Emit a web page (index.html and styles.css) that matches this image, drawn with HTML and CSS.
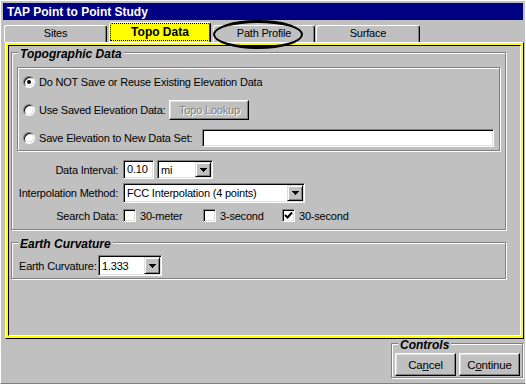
FILE: index.html
```html
<!DOCTYPE html>
<html lang="en">
<head>
    <meta charset="UTF-8">
    <meta name="viewport" content="width=device-width, initial-scale=1.0">
    <title>TAP Point to Point Study</title>
    <link rel="stylesheet" href="styles.css">
</head>
<body>
    <div class="window">
        <div class="titlebar">TAP Point to Point Study</div>

        <div class="tabs">
            <div class="tab tab-sites">Sites</div>
            <div class="tab tab-active">Topo Data</div>
            <div class="tab tab-path">Path Profile</div>
            <div class="tab tab-surface">Surface</div>
        </div>

        <div class="panel">
            <div class="panel-yellow">
                <div class="panel-inner">
                    <div class="group group-topo">
                        <div class="group-title">Topographic Data</div>
                        <div class="option-box">
                            <div class="option-row">
                                <span class="radio on"></span>
                                <span>Do NOT Save or Reuse Existing Elevation Data</span>
                            </div>
                            <div class="option-row">
                                <span class="radio"></span>
                                <span>Use Saved Elevation Data:</span>
                                <button class="btn btn-lookup" disabled>Topo Lookup</button>
                            </div>
                            <div class="option-row">
                                <span class="radio"></span>
                                <span>Save Elevation to New Data Set:</span>
                                <div class="field field-dataset"></div>
                            </div>
                        </div>

                        <div class="settings">
                            <div class="label">Data Interval:</div>
                            <div class="controls">
                                <div class="field field-interval">0.10</div>
                                <div class="combo combo-unit">
                                    <span class="combo-text">mi</span>
                                    <span class="combo-btn"><svg width="7" height="4" viewBox="0 0 7 4" shape-rendering="crispEdges"><path d="M0 0h7v1h-1v1h-1v1h-1v1h-1v-1h-1v-1h-1v-1h-1z"/></svg></span>
                                </div>
                            </div>

                            <div class="label">Interpolation Method:</div>
                            <div class="controls">
                                <div class="combo combo-method">
                                    <span class="combo-text">FCC Interpolation (4 points)</span>
                                    <span class="combo-btn"><svg width="7" height="4" viewBox="0 0 7 4" shape-rendering="crispEdges"><path d="M0 0h7v1h-1v1h-1v1h-1v1h-1v-1h-1v-1h-1v-1h-1z"/></svg></span>
                                </div>
                            </div>

                            <div class="label">Search Data:</div>
                            <div class="controls">
                                <div class="check-item"><span class="checkbox"></span>30-meter</div>
                                <div class="check-item check-mid"><span class="checkbox"></span>3-second</div>
                                <div class="check-item">
                                    <span class="checkbox"><svg width="9" height="9" viewBox="0 0 9 9"><path d="M1 4l2.5 2.5L8 1.5" stroke="#000" stroke-width="2" fill="none"/></svg></span>30-second
                                </div>
                            </div>
                        </div>
                    </div>

                    <div class="group group-earth">
                        <div class="group-title">Earth Curvature</div>
                        <div class="earth-row">
                            <span class="earth-label">Earth Curvature:</span>
                            <div class="combo combo-earth">
                                <span class="combo-text">1.333</span>
                                <span class="combo-btn"><svg width="7" height="4" viewBox="0 0 7 4" shape-rendering="crispEdges"><path d="M0 0h7v1h-1v1h-1v1h-1v1h-1v-1h-1v-1h-1v-1h-1z"/></svg></span>
                            </div>
                        </div>
                    </div>
                </div>
            </div>
        </div>

        <div class="footer">
            <div class="group group-controls">
                <div class="group-title">Controls</div>
                <div class="buttons">
                    <button class="btn btn-action">Ca<u>n</u>cel</button>
                    <button class="btn btn-action">C<u>o</u>ntinue</button>
                </div>
            </div>
        </div>

        <div class="circle-mark"></div>
    </div>
</body>
</html>
```

FILE: styles.css
```css
body {
    margin: 0;
    background-color: #c0c0c0;
    font-family: "Liberation Sans", Arial, sans-serif;
    font-size: 11px;
    color: #000;
}

.window {
    position: relative;
    width: 526px;
    height: 384px;
    box-sizing: border-box;
    border: 1px solid #fff;
    border-bottom-color: #808080;
    padding: 2px 1px 0 2px;
    letter-spacing: -0.2px;
}

.titlebar {
    width: 520px;
    height: 17px;
    box-sizing: border-box;
    padding: 1px 0 0 4px;
    background-color: #000080;
    color: #fff;
    font-size: 12px;
    font-weight: bold;
    line-height: 16px;
    letter-spacing: 0;
}

/* tab strip */
.tabs {
    display: flex;
    align-items: flex-end;
    height: 22px;
}

.tab {
    height: 17px;
    box-sizing: border-box;
    border: 1px solid;
    border-color: #fff #000 transparent #fff;
    border-bottom: none;
    border-radius: 3px 3px 0 0;
    box-shadow: inset -1px 0 #808080;
    text-align: center;
    line-height: 15px;
}

.tab-sites {
    width: 103px;
    margin-left: 1px;
}

.tab-active {
    width: 102px;
    height: 20px;
    margin-left: 2px;
    background-color: #ff0;
    font-size: 12px;
    font-weight: bold;
    line-height: 18px;
    letter-spacing: 0;
    outline: 1px dotted #000;
    outline-offset: -2px;
}

.tab-path {
    width: 102px;
    margin-left: 2px;
}

.tab-surface {
    width: 104px;
    margin-left: 1px;
}

/* tab page with the yellow frame */
.panel {
    width: 519px;
    height: 297px;
    margin-left: 2px;
    box-sizing: border-box;
    border: 1px solid;
    border-color: #fff #000 #000 #fff;
}

.panel-yellow {
    height: 100%;
    box-sizing: border-box;
    border: 2px solid #ff0;
}

.panel-inner {
    height: 100%;
    box-sizing: border-box;
    border: 1px solid;
    border-color: #000 #fff #fff #000;
    padding: 6px 0 0 2px;
}

/* etched group boxes */
.group {
    box-sizing: border-box;
    border: 1px solid #808080;
    box-shadow: inset 1px 1px #fff, 1px 1px #fff;
}

.group-title {
    width: fit-content;
    height: 12px;
    margin: -5px 0 0 6px;
    padding: 0 2px;
    background-color: #c0c0c0;
    font-size: 12px;
    font-weight: bold;
    font-style: italic;
    line-height: 12px;
    letter-spacing: 0;
}

.group-topo {
    width: 495px;
    height: 178px;
}

.group-earth {
    width: 495px;
    height: 37px;
    margin-top: 12px;
}

.option-box {
    width: 483px;
    height: 84px;
    margin: 7px 0 0 5px;
    box-sizing: border-box;
    border: 1px solid #808080;
    box-shadow: inset 1px 1px #fff, 1px 1px #fff;
}

.option-row {
    display: flex;
    align-items: center;
    height: 28px;
    padding-left: 5px;
}

/* radio buttons and check boxes */
.radio {
    position: relative;
    width: 12px;
    height: 12px;
    margin-right: 4px;
    box-sizing: border-box;
    border: 1px solid;
    border-color: #808080 #fff #fff #808080;
    border-radius: 50%;
    background-color: #fff;
    box-shadow: inset 1px 1px #000, inset -1px -1px #dfdfdf;
}

.radio.on::after {
    content: "";
    position: absolute;
    top: 3px;
    left: 3px;
    width: 4px;
    height: 4px;
    border-radius: 50%;
    background-color: #000;
}

.checkbox {
    display: flex;
    align-items: center;
    justify-content: center;
    width: 13px;
    height: 13px;
    margin-right: 4px;
    box-sizing: border-box;
    border: 1px solid;
    border-color: #808080 #fff #fff #808080;
    background-color: #fff;
    box-shadow: inset 1px 1px #000, inset -1px -1px #dfdfdf;
}

.check-item {
    display: flex;
    align-items: center;
    width: 80px;
}

.check-mid {
    width: 79px;
}

/* fields, combos and buttons */
.field {
    box-sizing: border-box;
    border: 1px solid;
    border-color: #808080 #fff #fff #808080;
    background-color: #fff;
    box-shadow: inset 1px 1px #000, inset -1px -1px #dfdfdf;
}

.field-dataset {
    width: 292px;
    height: 18px;
    margin: 0 5px 0 auto;
}

.field-interval {
    width: 31px;
    height: 19px;
    padding-left: 3px;
    line-height: 17px;
}

.combo {
    display: flex;
    box-sizing: border-box;
    padding: 1px;
    border: 1px solid;
    border-color: #808080 #fff #fff #808080;
    background-color: #fff;
    box-shadow: inset 1px 1px #000, inset -1px -1px #dfdfdf;
}

.combo-text {
    flex: 1;
    padding-left: 2px;
    align-self: center;
    white-space: nowrap;
    overflow: hidden;
}

.combo-btn {
    display: flex;
    align-items: center;
    justify-content: center;
    width: 16px;
    box-sizing: border-box;
    border: 1px solid;
    border-color: #dfdfdf #000 #000 #dfdfdf;
    background-color: #c0c0c0;
    box-shadow: inset 1px 1px #fff, inset -1px -1px #808080;
}

.combo-unit {
    width: 56px;
    height: 19px;
    margin-left: 3px;
}

.combo-method {
    width: 182px;
    height: 20px;
}

.combo-earth {
    width: 64px;
    height: 21px;
}

.btn {
    padding: 0;
    box-sizing: border-box;
    border: 1px solid;
    border-color: #fff #000 #000 #fff;
    background-color: #c0c0c0;
    box-shadow: inset -1px -1px #808080, inset 1px 1px #dfdfdf;
    font: inherit;
    letter-spacing: inherit;
    color: #000;
}

.btn-lookup {
    width: 80px;
    height: 20px;
    margin-left: 4px;
}

.btn:disabled {
    color: #808080;
    text-shadow: 1px 1px #fff;
}

/* data interval / method / search rows */
.settings {
    display: grid;
    grid-template-columns: 106px auto;
    grid-template-rows: 19px 20px 17px;
    column-gap: 5px;
    row-gap: 4px;
    margin-top: 9px;
}

.label {
    display: flex;
    align-items: center;
    justify-content: flex-end;
}

.controls {
    display: flex;
    align-items: center;
}

.earth-row {
    display: flex;
    align-items: center;
    margin-top: 5px;
    padding-left: 7px;
}

.earth-label {
    width: 79px;
}

/* bottom controls */
.footer {
    display: flex;
    justify-content: flex-end;
    height: 44px;
}

.group-controls {
    width: 132px;
    height: 35px;
    margin: 4px 1px 0 0;
}

.buttons {
    display: flex;
    gap: 3px;
    margin-top: 2px;
    padding-left: 3px;
}

.btn-action {
    width: 61px;
    height: 23px;
    font-size: 11.5px;
}

/* hand-drawn ring around the Path Profile tab */
.circle-mark {
    position: absolute;
    left: 212px;
    top: 19px;
    width: 90px;
    height: 29px;
    box-sizing: border-box;
    border: 2px solid #000;
    border-top-width: 3px;
    border-bottom-width: 3px;
    border-radius: 50%;
}
```
